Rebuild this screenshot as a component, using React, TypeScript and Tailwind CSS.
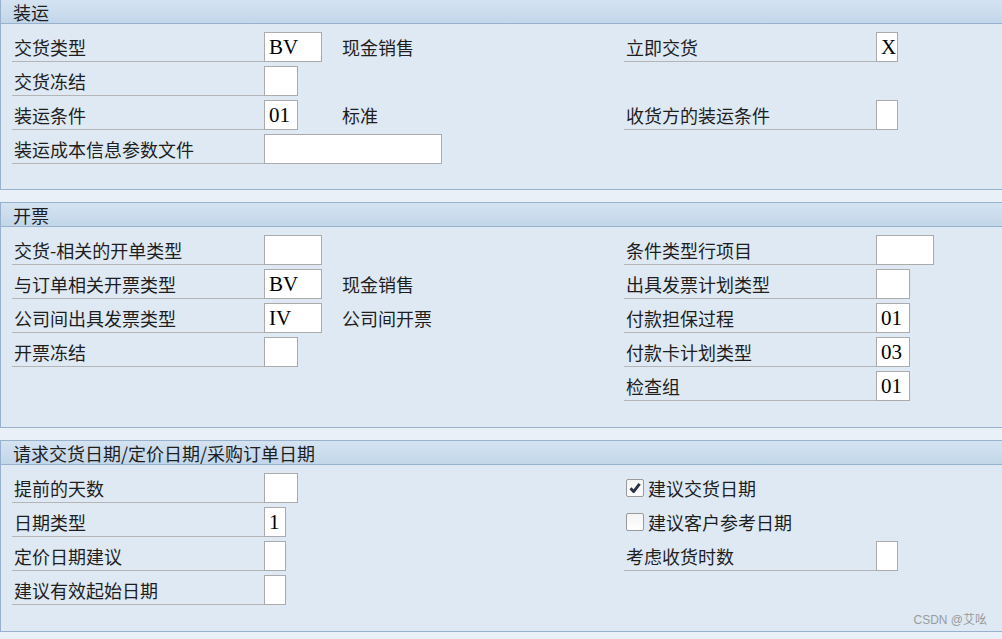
type Field = { kind: 'field'; label: string; value?: string; w: number; desc?: string };
type Check = { kind: 'check'; label: string; checked: boolean };
type Cell = Field | Check | null;

const f = (label: string, w: number, value?: string, desc?: string): Field => ({ kind: 'field', label, w, value, desc });
const c = (label: string, checked: boolean): Check => ({ kind: 'check', label, checked });

const sections: { title: string; rows: [Cell, Cell][] }[] = [
  {
    title: '装运',
    rows: [
      [f('交货类型', 58, 'BV', '现金销售'), f('立即交货', 22, 'X')],
      [f('交货冻结', 34), null],
      [f('装运条件', 34, '01', '标准'), f('收货方的装运条件', 22)],
      [f('装运成本信息参数文件', 178), null],
    ],
  },
  {
    title: '开票',
    rows: [
      [f('交货-相关的开单类型', 58), f('条件类型行项目', 58)],
      [f('与订单相关开票类型', 58, 'BV', '现金销售'), f('出具发票计划类型', 34)],
      [f('公司间出具发票类型', 58, 'IV', '公司间开票'), f('付款担保过程', 34, '01')],
      [f('开票冻结', 34), f('付款卡计划类型', 34, '03')],
      [null, f('检查组', 34, '01')],
    ],
  },
  {
    title: '请求交货日期/定价日期/采购订单日期',
    rows: [
      [f('提前的天数', 34), c('建议交货日期', true)],
      [f('日期类型', 22, '1'), c('建议客户参考日期', false)],
      [f('定价日期建议', 22), f('考虑收货时数', 22)],
      [f('建议有效起始日期', 22), null],
    ],
  },
];

function InputBox({ w, value }: { w: number; value?: string }) {
  return (
    <div
      className="h-[30px] shrink-0 bg-white border border-[#ababab] pl-[4px] flex items-center text-[21px] text-black font-['Liberation_Serif',serif] leading-none"
      style={{ width: w }}
    >
      {value}
    </div>
  );
}

function FieldCell({ cell }: { cell: Cell }) {
  if (!cell) return null;
  if (cell.kind === 'check') {
    return (
      <div className="flex items-center h-[30px] pl-[2px]">
        <div className="w-[18px] h-[18px] rounded-[2px] border border-[#9a9a9a] bg-gradient-to-b from-[#f4f4f4] to-white flex items-center justify-center">
          {cell.checked && (
            <svg width="12" height="12" viewBox="0 0 12 12">
              <path d="M1.5 6.2 L4.6 9.6 L10.6 1.8" fill="none" stroke="#2a3045" strokeWidth="2.8" strokeLinejoin="round" />
            </svg>
          )}
        </div>
        <span className="ml-[4px]">{cell.label}</span>
      </div>
    );
  }
  return (
    <div className="flex items-center h-[30px]">
      <div className="w-[252px] h-[30px] border-b border-[#b5b5b5] flex items-center pl-[2px] shrink-0">
        {cell.label}
      </div>
      <div className="min-w-[78px] shrink-0">
        <InputBox w={cell.w} value={cell.value} />
      </div>
      {cell.desc && <span>{cell.desc}</span>}
    </div>
  );
}

function Panel({ title, rows, first, last }: { title: string; rows: [Cell, Cell][]; first?: boolean; last?: boolean }) {
  return (
    <section
      className={`relative border-l border-b border-[#98b1cc] bg-[#dee9f4] ${first ? '' : 'border-t mt-[12px]'}`}
    >
      <div className="h-[24px] bg-gradient-to-b from-[#d5e3f1] to-[#c2d6ea] border-b border-[#98b1cc] flex items-center pl-[12px]">
        {title}
      </div>
      <div className={`pt-[8px] pl-[11px] flex flex-col gap-[4px] ${first ? 'pb-[25px]' : 'pb-[26px]'}`}>
        {rows.map(([l, r], i) => (
          <div key={i} className="flex h-[30px]">
            <div className="w-[612px] shrink-0">
              <FieldCell cell={l} />
            </div>
            <div>
              <FieldCell cell={r} />
            </div>
          </div>
        ))}
      </div>
      {last && (
        <div className="absolute right-[15px] bottom-[5px] text-[12px] text-[#9b9b9b] font-['Liberation_Sans','Noto_Sans_CJK_SC',sans-serif]">
          CSDN @艾吆
        </div>
      )}
    </section>
  );
}

export default function App() {
  return (
    <div className="w-[1002px] h-[639px] overflow-hidden bg-[#e9f0f8] text-[18px] text-[#1e1e1e] font-['Noto_Sans_CJK_SC',sans-serif] leading-none">
      {sections.map((s, i) => (
        <Panel key={s.title} title={s.title} rows={s.rows} first={i === 0} last={i === sections.length - 1} />
      ))}
    </div>
  );
}
